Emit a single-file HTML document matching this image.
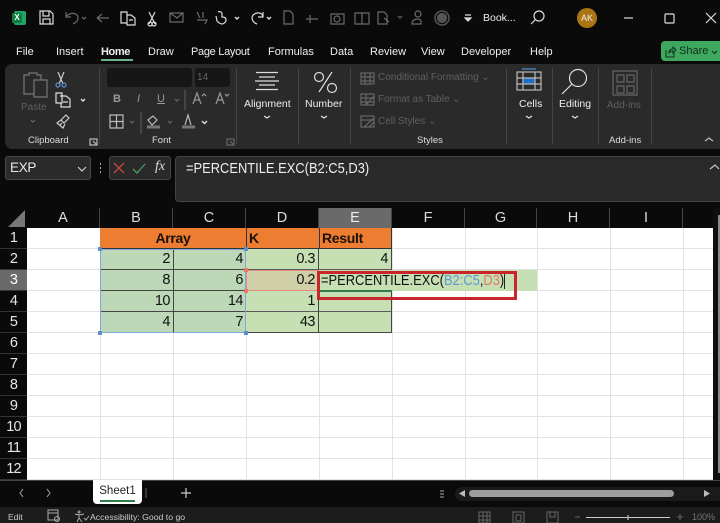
<!DOCTYPE html>
<html><head><meta charset="utf-8">
<style>
html,body{margin:0;padding:0;background:#0a0a0a;}
#p{position:relative;width:720px;height:523px;overflow:hidden;background:#0a0a0a;font-family:"Liberation Sans",sans-serif;color:#e8e8e8;}
.a{position:absolute;white-space:nowrap;}
.t{position:absolute;white-space:nowrap;font-size:11px;line-height:14px;color:#eee;}
.g{color:#5f5f5f;}
.s{font-size:9.5px;line-height:12px;}
.sep{position:absolute;top:68px;width:1px;height:76px;background:#444;}
svg{position:absolute;overflow:visible;fill:none;}
.ch{position:absolute;font-size:14.5px;line-height:20px;text-align:center;color:#ddd;top:208px;height:20px;background:#0a0a0a;border-right:1px solid #444;box-sizing:border-box;}
.rh{position:absolute;left:0;width:27px;height:21px;font-size:14.5px;letter-spacing:-.8px;line-height:21px;text-align:center;color:#e6e6e6;background:#0a0a0a;border-bottom:1px solid #333;box-sizing:border-box;}
.c{position:absolute;box-sizing:border-box;font-size:14.5px;letter-spacing:-.5px;line-height:21px;color:#111;height:21px;text-align:right;padding-right:3px;}
.sx{display:inline-block;transform:scaleX(.86);transform-origin:left center;}
.hd{font-weight:bold;font-size:14px;letter-spacing:-.3px;color:#1a1208;background:#ed7d31;border-bottom:1px solid #333;}
</style></head><body><div id="p">

<!-- title bar -->
<div class="a" style="left:14px;top:11px;width:12px;height:14px;background:#21a366;border-radius:2px;"></div>
<div class="a" style="left:12px;top:13px;width:10px;height:10px;background:#107c41;border-radius:1px;color:#fff;font-size:8px;font-weight:bold;line-height:10px;text-align:center;">X</div>
<svg style="left:0;top:0" width="720" height="40" stroke="#ddd" stroke-width="1.2">
<path d="M40 11h10l3 3v10H40z M43 11v5h6v-5 M43 24v-5h7v5"/>
<g stroke="#6b6b6b"><path d="M66 12v5h5 M66 17c3-5 12-5 12 1 0 3-3 5-5 6"/><path d="M82 17l2 2 2-2"/><path d="M97 18h12 M97 18l5-4 M97 18l5 4"/></g>
<path d="M121 12h6v11h-6z M127 15h4l4 3v7h-8v-2 M129 20h4" />
<path d="M149 12l6 12 M155 12l-6 12 M150 22a2 2 0 1 0 .1 0 M154 22a2 2 0 1 0 .1 0"/>
<g stroke="#6b6b6b"><path d="M170 13h13v9h-13z M170 13l7 5 6-5"/><path d="M197 12l3 6 M203 12v6 M197 20h10l-2 4"/></g>
<path d="M218 12c2-1 4 0 4 2v3c3 0 4 1 4 3s-2 4-4 4-4-2-5-3l-1-5"/><path d="M235 17l2 2 2-2" stroke-width="1.4"/>
<path d="M252 17c2-5 10-6 11 0 M263 12v5h-5 M252 17c0 4 2 6 5 7"/><path d="M267 17l2 2 2-2" stroke-width="1.4"/>
<g stroke="#6b6b6b"><path d="M284 11h6l3 3v10h-9z"/><path d="M306 19h12 M310 15v8"/><path d="M331 14h13v10h-13z"/><circle cx="337" cy="19" r="3"/><path d="M355 13h14v11h-14z M362 13v11"/><path d="M378 12h6l3 3v9h-9z M384 18l5 4"/><path d="M398 16l2 2 2-2"/><circle cx="418" cy="14" r="3"/><path d="M412 24c0-6 8-6 9-3v3z"/></g>
<circle cx="442" cy="18" r="4.500" stroke="#555" fill="#555"/><circle cx="442" cy="18" r="7" stroke="#555" stroke-width="1.500" fill="none"/>
<path d="M465 15h6 M465 18h6l-3 3z" fill="#ddd"/>
<circle cx="539" cy="16" r="5"/><path d="M535 20l-4 4"/>
<path d="M624 18h9"/><rect x="665" y="14" width="9" height="9" rx="1"/><path d="M706 13l10 10 M716 13l-10 10"/>
</svg>
<div class="t" style="left:483px;top:11px;font-size:10.5px;">Book...</div>
<div class="a" style="left:577px;top:8px;width:20px;height:20px;border-radius:50%;background:#a97512;color:#eee;font-size:9px;line-height:20px;text-align:center;">AK</div>

<!-- tabs -->
<div class="t" style="left:16px;top:45px;">File</div>
<div class="t" style="left:56px;top:45px;">Insert</div>
<div class="t" style="left:101px;top:45px;font-weight:bold;letter-spacing:-.4px;">Home</div>
<div class="a" style="left:101px;top:59px;width:32px;height:2px;background:#6fb58c;"></div>
<div class="t" style="left:148px;top:45px;">Draw</div>
<div class="t" style="left:191px;top:45px;letter-spacing:-.3px;">Page Layout</div>
<div class="t" style="left:268px;top:45px;">Formulas</div>
<div class="t" style="left:330px;top:45px;">Data</div>
<div class="t" style="left:370px;top:45px;">Review</div>
<div class="t" style="left:421px;top:45px;">View</div>
<div class="t" style="left:461px;top:45px;">Developer</div>
<div class="t" style="left:530px;top:45px;">Help</div>
<div class="a" style="left:661px;top:41px;width:59px;height:20px;background:#3fa85f;border-radius:4px 0 0 4px;font-size:11px;line-height:20px;padding-left:18px;box-sizing:border-box;color:#0e2f1a;">Share</div>
<svg style="left:665px;top:46px" width="12" height="12" stroke="#0e2f1a"><path d="M1 4v7h8V7 M4 7c0-3 2-4 4-4V1l3 3-3 3V5c-2 0-3 1-4 2z"/></svg>
<svg style="left:711px;top:49px" width="8" height="6" stroke="#0e2f1a"><path d="M1 2l2.500 2.500L6 2"/></svg>

<!-- ribbon -->
<div class="a" style="left:5px;top:64px;width:715px;height:85px;background:#2a2a2a;border-radius:7px 0 0 7px;"></div>
<div class="sep" style="left:99px"></div><div class="sep" style="left:236px"></div><div class="sep" style="left:298px"></div><div class="sep" style="left:350px"></div><div class="sep" style="left:506px"></div><div class="sep" style="left:552px"></div><div class="sep" style="left:598px"></div><div class="sep" style="left:651px"></div>

<svg style="left:0;top:60px" width="720" height="90" stroke="#7a7a7a" stroke-width="1.200">
<path d="M24 28V15h5v-2h8v2h4v5 M34 20h13v17H34z M24 28v6h10" stroke="#777"/>
<path d="M58 12l5 12 M64 12l-5 12" stroke="#ccc"/><circle cx="58" cy="25" r="2" stroke="#5b8fd0"/><circle cx="64" cy="25" r="2" stroke="#5b8fd0"/>
<path d="M56 33h6v10h-6z M60 36h6l4 3v8h-9v-4 M63 42h5" stroke="#ddd"/><path d="M81 39l2 2 2-2" stroke="#ddd" stroke-width="1.400"/>
<path d="M66 55l3 3-5 5-3-3z M61 60l-4 3 6 5 2-4 M60 65l2-2" stroke="#ccc"/>
<path d="M31 60l2 2 2-2" stroke="#666"/>
<path d="M90 79h7v6h-7z M93 81l4 4" stroke="#bbb"/>
<!-- font -->
<path d="M185 17l2 2 2-2 M224 17l2 2 2-2" stroke="#777"/>
<path d="M175 39l2 2 2-2" stroke="#666"/>
<path d="M185 30v20" stroke="#555"/>
<path d="M193 44l4-11 4 11 M195 40h4 M202 36l2-2 2 2" stroke="#999"/>
<path d="M216 44l4-11 4 11 M218 40h4 M225 34l2 2 2-2" stroke="#999"/>
<path d="M110 55h13v13h-13z M116.500 55v13 M110 61.500h13" stroke="#bbb"/>
<path d="M130 61l2 2 2-2" stroke="#666"/>
<path d="M141 52v22" stroke="#555"/>
<path d="M148 60l5-4 4 4-5 5z" stroke="#bbb"/><path d="M147 67h13" stroke="#777" stroke-width="3"/>
<path d="M168 61l2 2 2-2" stroke="#666"/>
<path d="M185 65l3-10 3 10" stroke="#bbb"/><path d="M182 67h13" stroke="#777" stroke-width="3"/>
<path d="M202 61l2.500 2.500 2.500-2.500" stroke="#ddd" stroke-width="1.400"/>
<path d="M227 79h7v6h-7z M230 81l4 4" stroke="#666"/>
<!-- align/num -->
<path d="M256 12.500h22 M259 17h16 M255 21h24 M259 25h16 M256 29.500h22" stroke="#ddd"/>
<path d="M264 56l3 2 3-2 M321 56l3 2 3-2" stroke="#ddd" stroke-width="1.300"/>
<path d="M332 12l-13 20" stroke="#ddd" stroke-width="1.200"/><circle cx="319" cy="17" r="4.500" stroke="#ddd"/><circle cx="332" cy="28" r="4.500" stroke="#ddd"/>
<!-- styles -->
<path d="M361 13h13v11h-13z M361 17h13 M361 21h13 M365 13v11 M370 13v11" stroke="#666"/>
<path d="M361 34h13v11h-13z M361 38h13 M361 42h13 M366 34v11 M374 36l-8 9" stroke="#666"/>
<path d="M361 56h13v11h-13z M361 60h13 M374 58l-10 9 M374 62l-5 5" stroke="#666"/>
<!-- cells -->
<path d="M522 9h14" stroke="#4c8fd0"/>
<rect x="523" y="18" width="12" height="6" fill="#1e6fc8" stroke="none"/><rect x="517" y="12" width="24" height="18" stroke="#bbb"/><path d="M517 18h24 M517 24h24 M523 12v18 M535 12v18" stroke="#bbb"/>
<path d="M526 56l3 2 3-2 M572 56l3 2 3-2" stroke="#ddd" stroke-width="1.300"/>
<circle cx="578" cy="18" r="8.500" stroke="#ddd"/><path d="M572 24l-10 10" stroke="#ddd"/>
<!-- addins -->
<path d="M613 11h24v24h-24z" stroke="#666"/><path d="M617 15h7v7h-7z M627 15h7v7h-7z M617 26h7v7h-7z M627 26h7v7h-7z" stroke="#666"/>
<path d="M705 81l4-3 4 3" stroke="#bbb" stroke-width="1.300"/>
</svg>

<div class="t s g" style="left:21px;top:102px;font-size:10px;">Paste</div>
<div class="t s" style="left:28px;top:135px;color:#ddd;">Clipboard</div>
<div class="a" style="left:107px;top:68px;width:85px;height:19px;background:#161616;border-radius:3px;"></div>
<div class="a" style="left:195px;top:68px;width:35px;height:19px;background:#161616;border-radius:3px;color:#666;font-size:10px;line-height:19px;padding-left:2px;box-sizing:border-box;">14</div>
<div class="t" style="left:113px;top:92px;font-weight:bold;color:#999;font-size:11px;">B</div>
<div class="t" style="left:137px;top:92px;font-style:italic;color:#999;font-size:11px;">I</div>
<div class="t" style="left:157px;top:92px;text-decoration:underline;color:#999;font-size:11px;">U</div>
<div class="t s" style="left:152px;top:135px;color:#ddd;">Font</div>
<div class="t s" style="left:244px;top:98px;color:#eee;font-size:10.5px;">Alignment</div>
<div class="t s" style="left:305px;top:98px;color:#eee;font-size:10.5px;">Number</div>
<div class="t s g" style="left:378px;top:72px;font-size:10px;">Conditional Formatting ⌄</div>
<div class="t s g" style="left:378px;top:94px;font-size:10px;">Format as Table ⌄</div>
<div class="t s g" style="left:378px;top:116px;font-size:10px;">Cell Styles ⌄</div>
<div class="t s" style="left:417px;top:135px;color:#ddd;">Styles</div>
<div class="t s" style="left:519px;top:98px;color:#eee;font-size:10.5px;">Cells</div>
<div class="t s" style="left:559px;top:98px;color:#eee;font-size:10.5px;">Editing</div>
<div class="t s g" style="left:607px;top:100px;font-size:10px;">Add-ins</div>
<div class="t s" style="left:609px;top:135px;color:#ddd;">Add-ins</div>

<!-- formula bar -->
<div class="a" style="left:5px;top:156px;width:86px;height:24px;background:#2a2a2a;border:1px solid #4a4a4a;border-radius:3px;box-sizing:border-box;font-size:13.5px;letter-spacing:-.3px;line-height:22px;padding-left:4px;color:#e8e8e8;">EXP</div>
<svg style="left:0;top:150px" width="180" height="32" stroke="#ccc">
<path d="M78 17l4 4 4-4" stroke-width="1.200"/>
<path d="M100 14h1 M100 18h1 M100 22h1" stroke="#ddd" stroke-width="1.500"/>
</svg>
<div class="a" style="left:109px;top:156px;width:62px;height:24px;background:#2a2a2a;border:1px solid #444;border-radius:3px;box-sizing:border-box;"></div>
<svg style="left:109px;top:156px" width="62" height="24"><path d="M5 7l10 10 M15 7L5 17" stroke="#c8474a" stroke-width="1.300"/><path d="M24 13l4 4 8-9" stroke="#4c9a62" stroke-width="1.300"/></svg>
<div class="a" style="left:155px;top:157px;font-family:'Liberation Serif',serif;font-style:italic;font-size:14px;line-height:20px;color:#ddd;">fx</div>
<div class="a" style="left:175px;top:156px;width:545px;height:46px;background:#2a2a2a;border:1px solid #444;border-right:none;border-radius:4px 0 0 4px;box-sizing:border-box;font-size:15px;line-height:24px;padding-left:10px;color:#eee;"><span class="sx">=PERCENTILE.EXC(B2:C5,D3)</span></div>
<svg style="left:709px;top:163px" width="11" height="8"><path d="M1 6l5-4 4 4" stroke="#ccc" stroke-width="1.200"/></svg>

<!-- grid background -->
<div class="a" style="left:27px;top:228px;width:686px;height:252px;background:#fff;
background-image:linear-gradient(#e2e2e2 1px,transparent 1px);background-size:100% 21px;background-position:0 20px;"></div>
<svg style="left:0;top:228px" width="720" height="252" stroke="#e2e2e2"><path d="M100.500 0v252 M173.500 0v252 M246.500 0v252 M319.500 0v252 M392.500 0v252 M465.500 0v252 M537.500 0v252 M610.500 0v252 M683.500 0v252"/></svg>

<!-- col headers -->
<div class="a" style="left:0;top:208px;width:27px;height:20px;background:#0a0a0a;"></div>
<svg style="left:8px;top:210px" width="18" height="17"><path d="M17 0v17H0z" fill="#777"/></svg>
<div class="ch" style="left:27px;width:73px;">A</div>
<div class="ch" style="left:100px;width:73px;">B</div>
<div class="ch" style="left:173px;width:73px;">C</div>
<div class="ch" style="left:246px;width:73px;">D</div>
<div class="ch" style="left:319px;width:73px;background:#6a6a6a;color:#eee;">E</div>
<div class="ch" style="left:392px;width:73px;">F</div>
<div class="ch" style="left:465px;width:72px;">G</div>
<div class="ch" style="left:537px;width:73px;">H</div>
<div class="ch" style="left:610px;width:73px;">I</div>
<div class="ch" style="left:683px;width:37px;border-right:none;"></div>

<!-- row headers -->
<div class="rh" style="top:228px">1</div><div class="rh" style="top:249px">2</div><div class="rh" style="top:270px;background:#6a6a6a;color:#fff;">3</div><div class="rh" style="top:291px">4</div><div class="rh" style="top:312px">5</div><div class="rh" style="top:333px">6</div><div class="rh" style="top:354px">7</div><div class="rh" style="top:375px">8</div><div class="rh" style="top:396px">9</div><div class="rh" style="top:417px">10</div><div class="rh" style="top:438px">11</div><div class="rh" style="top:459px">12</div>

<!-- data -->
<div class="c hd" style="left:100px;top:228px;width:146px;text-align:center;padding:0;">Array</div>
<div class="c hd" style="left:246px;top:228px;width:73px;text-align:left;padding:0 0 0 2px;border-left:1px solid #333;">K</div>
<div class="c hd" style="left:319px;top:228px;width:73px;text-align:left;padding:0 0 0 2px;border-left:1px solid #333;border-right:1px solid #333;">Result</div>

<div class="c" style="left:100px;top:249px;width:73px;background:#bcd8b6;border-bottom:1px solid #444;">2</div>
<div class="c" style="left:173px;top:249px;width:73px;background:#bcd8b6;border-bottom:1px solid #444;border-left:1px solid #444;">4</div>
<div class="c" style="left:100px;top:270px;width:73px;background:#bcd8b6;border-bottom:1px solid #444;">8</div>
<div class="c" style="left:173px;top:270px;width:73px;background:#bcd8b6;border-bottom:1px solid #444;border-left:1px solid #444;">6</div>
<div class="c" style="left:100px;top:291px;width:73px;background:#bcd8b6;border-bottom:1px solid #444;">10</div>
<div class="c" style="left:173px;top:291px;width:73px;background:#bcd8b6;border-bottom:1px solid #444;border-left:1px solid #444;">14</div>
<div class="c" style="left:100px;top:312px;width:73px;background:#bcd8b6;">4</div>
<div class="c" style="left:173px;top:312px;width:73px;background:#bcd8b6;border-left:1px solid #444;">7</div>

<div class="c" style="left:246px;top:249px;width:73px;background:#c6e0b4;border-bottom:1px solid #5a5a5a;border-right:1px solid #444;">0.3</div>
<div class="c" style="left:246px;top:270px;width:73px;background:#cfcfa8;border-right:1px solid #444;">0.2</div>
<div class="c" style="left:246px;top:291px;width:73px;background:#c6e0b4;border-bottom:1px solid #5a5a5a;border-right:1px solid #444;">1</div>
<div class="c" style="left:246px;top:312px;width:73px;background:#c6e0b4;border-bottom:1px solid #444;border-right:1px solid #444;">43</div>
<div class="c" style="left:319px;top:249px;width:73px;background:#c6e0b4;border-bottom:1px solid #5a5a5a;border-right:1px solid #444;">4</div>
<div class="c" style="left:319px;top:291px;width:73px;background:#c6e0b4;border-bottom:1px solid #5a5a5a;border-right:1px solid #444;"></div>
<div class="c" style="left:319px;top:312px;width:73px;background:#c6e0b4;border-bottom:1px solid #444;border-right:1px solid #444;"></div>

<!-- editing cell -->
<div class="a" style="left:319px;top:270px;width:218px;height:21px;background:#c6e0b4;"></div>
<div class="a" style="left:321px;top:271px;font-size:15px;line-height:20px;color:#111;"><span class="sx">=PERCENTILE.EXC(<span style="color:#5b9bd5">B2:C5</span>,<span style="color:#e07a5f">D3</span>)</span></div>
<div class="a" style="left:504px;top:273px;width:1px;height:16px;background:#222;"></div>
<div class="a" style="left:319px;top:290px;width:73px;height:2px;background:#2e7d4a;"></div>

<!-- range outlines -->
<div class="a" style="left:100px;top:249px;width:146px;height:84px;border:1px solid #7fa8dc;box-sizing:border-box;"></div>
<div class="a" style="left:246px;top:270px;width:73px;height:21px;border:1px solid #e88a80;box-sizing:border-box;"></div>
<svg style="left:0;top:0" width="720" height="523"><g fill="#5b8fd0"><rect x="98" y="247" width="4" height="4"/><rect x="244" y="247" width="4" height="4"/><rect x="98" y="331" width="4" height="4"/><rect x="244" y="331" width="4" height="4"/></g><g fill="#e8786c"><rect x="244" y="268" width="4" height="4"/><rect x="244" y="289" width="4" height="4"/></g></svg>

<!-- red box -->
<div class="a" style="left:317px;top:271px;width:200px;height:29px;border:3px solid #c8262c;box-sizing:border-box;"></div>

<!-- right scrollbar strip -->
<div class="a" style="left:713px;top:208px;width:7px;height:272px;background:#0f0f0f;"></div>
<div class="a" style="left:718px;top:215px;width:2px;height:258px;background:#8a8a8a;"></div>

<!-- sheet tabs -->
<div class="a" style="left:0;top:480px;width:720px;height:27px;background:#0a0a0a;border-top:1px solid #444;box-sizing:border-box;"></div>
<svg style="left:0;top:480px" width="720" height="27" stroke="#888"><path d="M23 9l-3 4 3 4 M47 9l3 4-3 4" stroke-width="1.200"/><path d="M146 8v10" stroke="#666"/><path d="M181 13h10 M186 8v10" stroke="#ccc" stroke-width="1.200"/></svg>
<div class="a" style="left:93px;top:480px;width:49px;height:24px;background:#fff;border-radius:0 0 4px 4px;font-size:11.5px;line-height:23px;text-align:center;color:#222;">Sheet1</div>
<div class="a" style="left:100px;top:500px;width:35px;height:2px;background:#2e7d4a;"></div>

<!-- h scrollbar -->
<div class="a" style="left:455px;top:487px;width:265px;height:14px;background:#1a1a1a;border-radius:7px 0 0 7px;"></div>
<div class="a" style="left:469px;top:490px;width:205px;height:7px;background:#9e9e9e;border-radius:4px;"></div>
<svg style="left:0;top:485px" width="720" height="20"><path d="M465 5v7l-6-3.500z M704 5v7l6-3.500z" fill="#bbb"/><path d="M440 6h4 M440 9h4 M440 12h4" stroke="#aaa"/></svg>

<!-- status bar -->
<div class="a" style="left:0;top:507px;width:720px;height:16px;background:#1c1c1c;"></div>
<div class="a" style="left:8px;top:511px;font-size:8.5px;line-height:12px;color:#ccc;">Edit</div>
<div class="a" style="left:90px;top:511px;font-size:8.7px;line-height:12px;color:#ccc;">Accessibility: Good to go</div>
<svg style="left:0;top:507px" width="720" height="16" stroke="#aaa">
<path d="M48 3h10v10H48z M48 6h10" /><circle cx="57" cy="12" r="2.500"/>
<path d="M75 7c3 1 6 1 9 0 M79 4a1 1 0 1 0 .1 0 M79 8v3l-2 4 M79 11l3 4 M84 11l2 2 3-4"/>
<g stroke="#666"><path d="M479 5h11v11h-11z M479 9h11 M479 13h11 M483 5v11 M487 5v11"/><path d="M513 5h11v11h-11z M516 8h5v6h-5z"/><path d="M547 5h11v11h-11z M550 5v5h5V5"/><path d="M575 10h5 M677 10h6 M680 7v6"/></g>
<path d="M586 10.500h84" stroke="#ccc"/><path d="M628 8v5" stroke="#aaa" stroke-width="1.500"/>
</svg>
<div class="a" style="left:692px;top:511px;font-size:9px;line-height:12px;color:#777;">100%</div>
</div></body></html>
